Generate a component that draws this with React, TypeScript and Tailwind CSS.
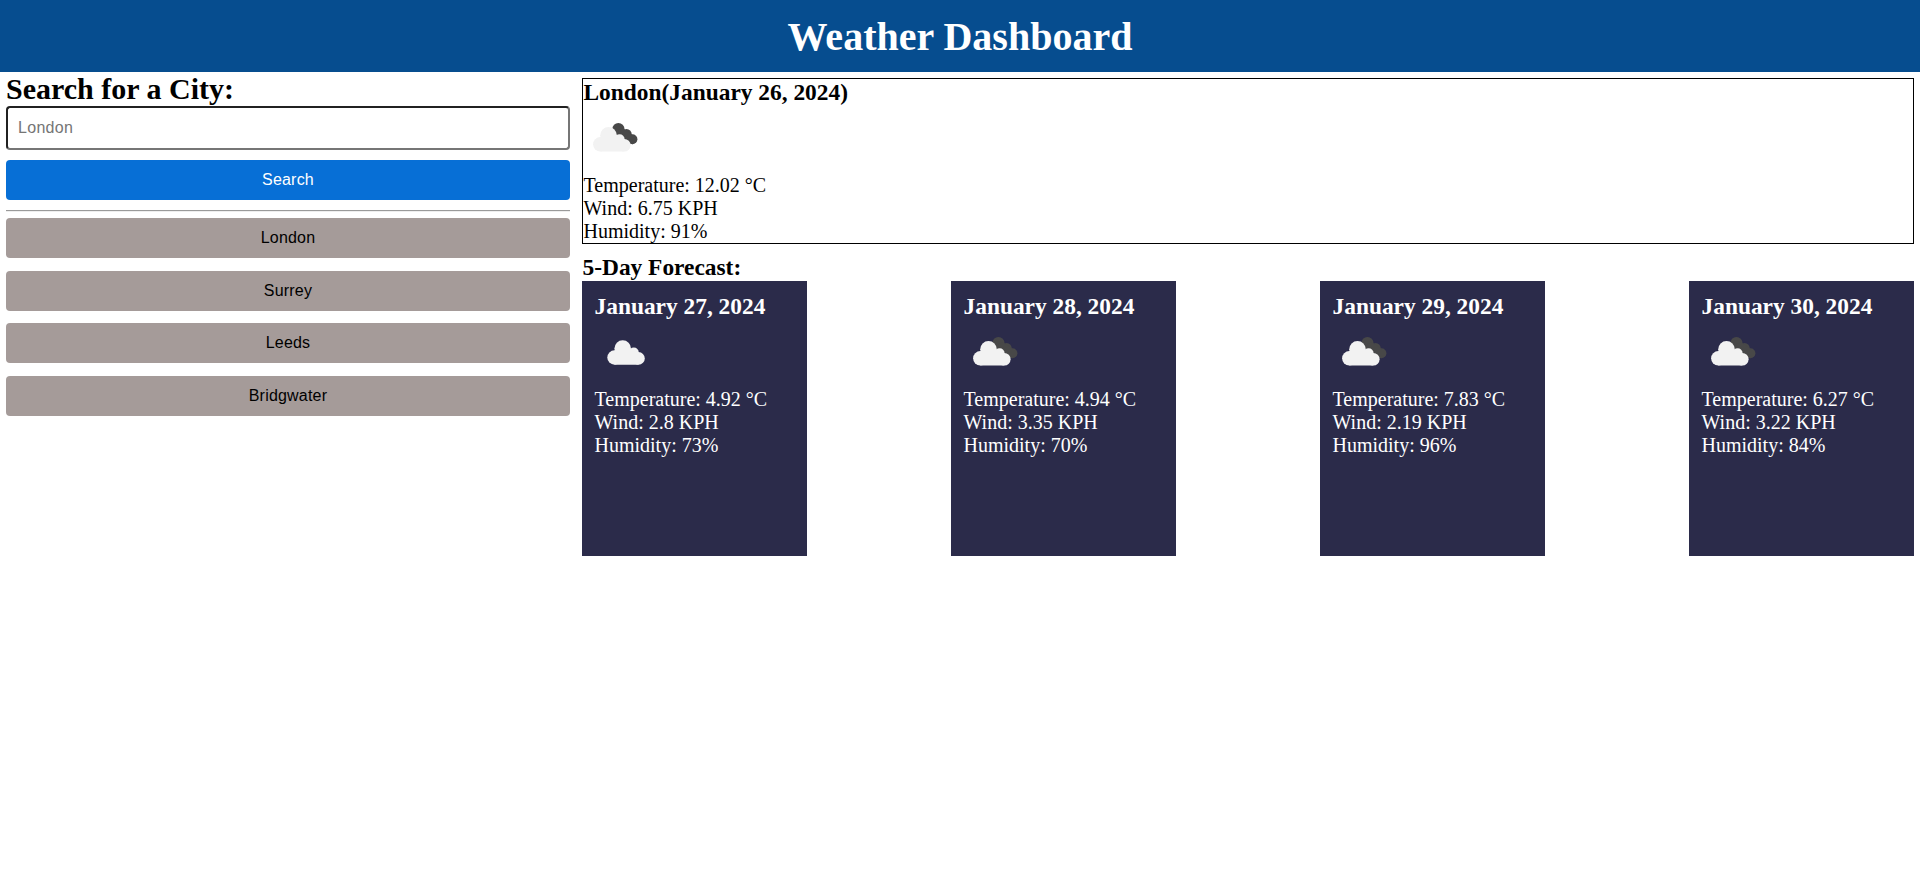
const cities = ["London", "Surrey", "Leeds", "Bridgwater"];

const forecast = [
  { date: "January 27, 2024", icon: "cloud", temp: "4.92", wind: "2.8", humidity: 73 },
  { date: "January 28, 2024", icon: "broken", temp: "4.94", wind: "3.35", humidity: 70 },
  { date: "January 29, 2024", icon: "broken", temp: "7.83", wind: "2.19", humidity: 96 },
  { date: "January 30, 2024", icon: "broken", temp: "6.27", wind: "3.22", humidity: 84 },
];

function FrontCloud() {
  return (
    <g fill="#f2f2f2">
      <circle cx="25.5" cy="29" r="8.3" />
      <circle cx="17.3" cy="38" r="7.2" />
      <circle cx="36.6" cy="33" r="5" />
      <circle cx="41.3" cy="38.9" r="6.3" />
      <path d="M17.3 31h19v3l5 1v10.2h-24z" />
    </g>
  );
}

function WeatherIcon({ kind, className }: { kind: string; className: string }) {
  return (
    <svg viewBox="0 0 60 68" className={className} aria-hidden="true">
      {kind === "cloud" ? (
        <g transform="translate(3.2 -0.5)">
          <FrontCloud />
        </g>
      ) : (
        <g transform="translate(0 0.3)">
          <g fill="#484848">
            <circle cx="35.4" cy="22.8" r="6.1" />
            <circle cx="43.5" cy="27.8" r="5.2" />
            <circle cx="49.4" cy="33" r="5" />
            <path d="M32 25l8-3 10 7v9l-6-1.600z" />
          </g>
          <FrontCloud />
        </g>
      )}
    </svg>
  );
}

function Readings({ temp, wind, humidity }: { temp: string; wind: string; humidity: number }) {
  return (
    <>
      <p>Temperature: {temp} °C</p>
      <p>Wind: {wind} KPH</p>
      <p>Humidity: {humidity}%</p>
    </>
  );
}

export default function App() {
  return (
    <div className="min-h-screen bg-white font-['Liberation_Serif',serif] text-[20px] leading-[23px] text-black">
      <header className="flex h-[72px] items-center justify-center bg-[#064d8f] pt-0.5 text-white">
        <h1 className="text-[40px] leading-[46px] font-bold">Weather Dashboard</h1>
      </header>
      <main className="flex">
        <aside className="flex w-[576px] shrink-0 flex-col px-1.5 font-['Liberation_Sans',sans-serif] text-base leading-[18px] tracking-[0.2px]">
          <h2 className="font-['Liberation_Serif',serif] text-[30px] leading-[34px] font-bold tracking-normal">
            Search for a City:
          </h2>
          <input
            type="text"
            placeholder="London"
            className="h-11 rounded-[4px] border-2 border-[#767676] border-t-[#212121] border-l-[#212121] px-2.5 tracking-[0.3px] placeholder:text-[#757575]"
          />
          <button className="mt-2.5 h-10 rounded-[4px] bg-[#076fd6] text-white">Search</button>
          <hr className="mt-2.5 h-0.5 border-t border-b border-t-[#9a9a9a] border-b-[#eeeeee]" />
          <div className="mt-1.5 flex flex-col gap-[12.6px]">
            {cities.map((city) => (
              <button key={city} className="h-10 rounded-[4px] bg-[#a59b99]">
                {city}
              </button>
            ))}
          </div>
        </aside>
        <div className="grow px-1.5 pt-1.5">
          <section className="h-[166px] border border-black pl-[0.5px]">
            <h3 className="text-[23.4px] leading-[27px] font-bold">London(January 26, 2024)</h3>
            <WeatherIcon kind="broken" className="-ml-[0.5px] block h-[68px] w-[60px]" />
            <Readings temp="12.02" wind="6.75" humidity={91} />
          </section>
          <h3 className="mt-2.5 pl-[0.5px] text-[23.4px] leading-[27px] font-bold">5-Day Forecast:</h3>
          <section className="flex justify-between">
            {forecast.map((day) => (
              <article key={day.date} className="h-[275px] w-[225px] bg-[#2b2b4a] px-[12.5px] pt-3 text-white">
                <h3 className="text-[23.4px] leading-[27px] font-bold whitespace-nowrap">{day.date}</h3>
                <WeatherIcon kind={day.icon} className="-ml-[0.5px] block h-[68px] w-[60px]" />
                <Readings temp={day.temp} wind={day.wind} humidity={day.humidity} />
              </article>
            ))}
          </section>
        </div>
      </main>
    </div>
  );
}
